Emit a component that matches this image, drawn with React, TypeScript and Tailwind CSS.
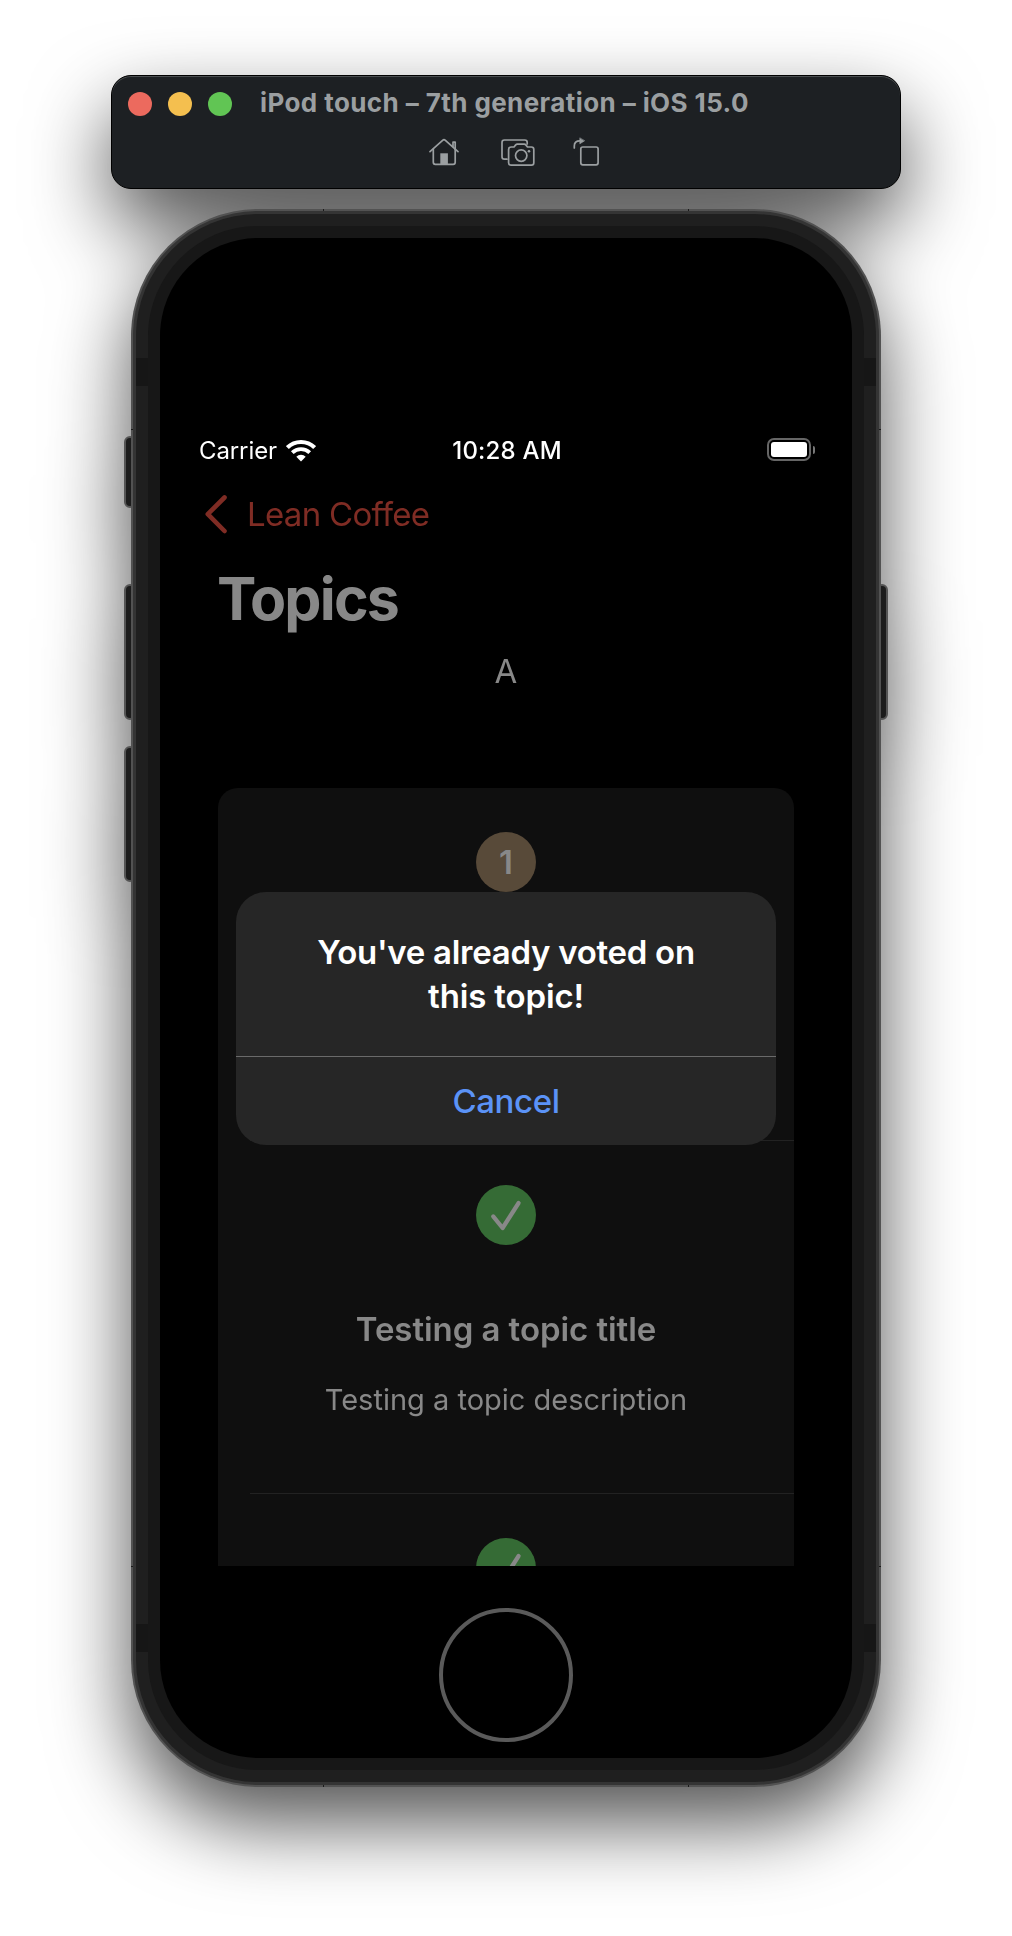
import type { ReactNode } from "react";

function TrafficLights() {
  return (
    <div className="absolute left-4 top-4 flex gap-4">
      <span className="size-6 rounded-full bg-[#ec6a5e]" />
      <span className="size-6 rounded-full bg-[#f4bf4f]" />
      <span className="size-6 rounded-full bg-[#61c554]" />
    </div>
  );
}

function HomeIcon() {
  return (
    <svg width="30" height="28" viewBox="0 0 30 28" fill="none" stroke="#9b9fa1" strokeWidth="1.7" strokeLinejoin="round" strokeLinecap="round">
      <path d="M1 13.6 13.6 2.3Q15 1 16.4 2.3L29 13.6" />
      <path d="M4.3 11V24.3Q4.3 26.3 6.3 26.3H24.2Q26.2 26.3 26.2 24.3V11" />
      <path d="M24 8.5V4.2H26.2V11" />
      <rect x="11.3" y="15.3" width="7.6" height="11.5" fill="#9b9fa1" stroke="none" />
    </svg>
  );
}

function ScreenshotIcon() {
  return (
    <svg width="34" height="28" viewBox="0 0 34 28" fill="none" stroke="#9b9fa1" strokeWidth="1.7" strokeLinejoin="round" strokeLinecap="round">
      <path d="M6 20.2H3.4Q1 20.2 1 17.8V3.4Q1 1 3.4 1H23.8Q26.2 1 26.2 3.4V5" />
      <path d="M10 8H13L14.7 5.9Q15.4 5.2 16.3 5.2H23.2Q24.2 5.2 24.8 5.9L26.5 8H30.4Q32.8 8 32.8 10.4V23.8Q32.8 26.2 30.4 26.2H10Q7.6 26.2 7.6 23.8V10.4Q7.6 8 10 8Z" />
      <circle cx="20.2" cy="16.6" r="5.7" />
      <circle cx="28" cy="12.2" r="1.3" fill="#9b9fa1" stroke="none" />
    </svg>
  );
}

function RotateIcon() {
  return (
    <svg width="27" height="30" viewBox="0 0 27 30" fill="none" stroke="#9b9fa1" strokeWidth="1.7" strokeLinejoin="round" strokeLinecap="round">
      <rect x="7.8" y="10" width="17.3" height="17.8" rx="2" />
      <path d="M1.3 11V9Q1.3 3.9 7 3.9" />
      <path d="M6.8 1.2V6.8L11.4 3.9Z" fill="#9b9fa1" strokeWidth="0.6" />
    </svg>
  );
}

function WifiIcon() {
  return (
    <svg width="30" height="23" viewBox="0 0 30 23" fill="none" stroke="#fff" strokeWidth="4.1">
      <path d="M1.4 8.6A19.4 19.4 0 0 1 28.6 8.6" />
      <path d="M6.3 13.6A12.4 12.4 0 0 1 23.7 13.6" strokeWidth="3.8" />
      <path d="M10.3 17.8A6.6 6.6 0 0 1 19.7 17.8L15 22.4Z" fill="#fff" stroke="none" />
    </svg>
  );
}

function BatteryIcon() {
  return (
    <div className="flex items-center gap-0.5">
      <div className="h-[23px] w-11 rounded-[7px] border-2 border-[#666] p-0.5">
        <div className="h-full w-full rounded-[3px] bg-white" />
      </div>
      <div className="h-2 w-0.5 rounded-r-full bg-[#777]" />
    </div>
  );
}

function Check() {
  return (
    <svg width="32" height="32" viewBox="0 0 32 32" fill="none" stroke="#888" strokeWidth="4.2" strokeLinecap="round" strokeLinejoin="round">
      <path d="M3.2 17.4 12.6 29 28.6 4" />
    </svg>
  );
}

function Badge({ voted, children }: { voted?: boolean; children: ReactNode }) {
  return (
    <div
      className={
        voted
          ? "flex size-[60px] shrink-0 items-center justify-center rounded-full bg-[#356b35]"
          : "flex size-[60px] shrink-0 items-center justify-center rounded-full bg-[#584a39] text-[33px] font-semibold leading-none text-[#888]"
      }
    >
      {children}
    </div>
  );
}

function Alert() {
  return (
    <div className="absolute left-[76px] top-[654px] flex h-[253px] w-[540px] flex-col rounded-[30px] bg-[#262626] text-center">
      <div className="h-[164px] pt-[38px] text-[33px] font-semibold leading-[44px] text-white">
        <p className="tracking-[-0.28px]">You've already voted on</p>
        <p className="tracking-[-0.15px]">this topic!</p>
      </div>
      <div className="h-px bg-[#6a6a6a]" />
      <button className="flex flex-1 items-center justify-center text-[33px] font-medium leading-none tracking-[-0.4px] text-[#5b93f7]">
        Cancel
      </button>
    </div>
  );
}

function Screen() {
  return (
    <div className="relative flex h-full flex-col items-center overflow-hidden rounded-[98px] bg-black pt-[193px] leading-none text-[#888]">
      <div className="grid h-10 w-full grid-cols-3 items-center pl-[39px] pr-[37px] text-white">
        <div className="flex items-center gap-[9px]">
          <span className="text-[24px] tracking-[-0.1px]">Carrier</span>
          <div className="-mt-0.5"><WifiIcon /></div>
        </div>
        <span className="text-center text-[24px] font-medium tracking-[0.2px]">10:28 AM</span>
        <div className="-mt-[3px] flex justify-end"><BatteryIcon /></div>
      </div>
      <div className="flex h-[86px] w-full items-center gap-[19px] pl-[44px] text-[#7f2c24]">
        <svg width="24" height="40" viewBox="0 0 24 40" fill="none" stroke="currentColor" strokeWidth="4.6" strokeLinecap="round" strokeLinejoin="round">
          <path d="M20.5 3.5 3.8 20.2 20.5 37" />
        </svg>
        <span className="text-[33px] tracking-[-0.7px]">Lean Coffee</span>
      </div>
      <h1 className="flex h-[82px] w-full items-center pl-[57px] text-[59px] font-bold tracking-[-1.8px]">Topics</h1>
      <div className="flex h-16 items-center text-[33px]">A</div>
      <div className="mt-[85px] h-[778px] w-[576px] shrink-0 overflow-hidden rounded-t-[20px] bg-[#0f0f0f]">
        <div className="flex h-[352px] flex-col items-center pt-11">
          <Badge>1</Badge>
        </div>
        <div className="ml-8 h-px bg-[#222]" />
        <div className="flex h-[352px] flex-col items-center pt-11">
          <Badge voted><Check /></Badge>
          <h2 className="mt-[62px] text-[33px] font-semibold leading-[44px] tracking-[-0.07px]">Testing a topic title</h2>
          <p className="mt-[31px] text-[29px] leading-9">Testing a topic description</p>
        </div>
        <div className="ml-8 h-px bg-[#222]" />
        <div className="flex flex-col items-center pt-11">
          <Badge voted><Check /></Badge>
        </div>
      </div>
      <div className="mt-[42px] size-[134px] shrink-0 rounded-full border-4 border-[#5a5a5a]" />
      <Alert />
    </div>
  );
}

function Phone() {
  return (
    <div className="relative mt-5 h-[1578px] w-[750px]">
      <div className="absolute -left-[7px] top-[227px] h-[72px] w-3 rounded-[6px] border-2 border-[#555] bg-[#1c1c1c]" />
      <div className="absolute -left-[7px] top-[375px] h-[136px] w-3 rounded-[6px] border-2 border-[#555] bg-[#1c1c1c]" />
      <div className="absolute -left-[7px] top-[537px] h-[136px] w-3 rounded-[6px] border-2 border-[#555] bg-[#1c1c1c]" />
      <div className="absolute -right-[7px] top-[375px] h-[136px] w-3 rounded-[6px] border-2 border-[#555] bg-[#1c1c1c]" />
      <div className="relative h-full rounded-[127px] bg-[#525252] p-0.5">
        <div className="h-full rounded-[125px] bg-[#343434] p-[3px]">
          <div className="h-full rounded-[122px] bg-[#1f1f1f] p-3">
            <div className="h-full rounded-[110px] bg-[#171717] p-3">
              <Screen />
            </div>
          </div>
        </div>
      </div>
      <div className="absolute left-[5px] top-[149px] h-7 w-3 bg-[#161616]" />
      <div className="absolute right-[5px] top-[149px] h-7 w-3 bg-[#161616]" />
      <div className="absolute left-[5px] top-[1415px] h-7 w-3 bg-[#161616]" />
      <div className="absolute right-[5px] top-[1415px] h-7 w-3 bg-[#161616]" />
      <div className="absolute left-0 top-[220px] h-px w-0.5 bg-[#1a1a1a]" />
      <div className="absolute right-0 top-[220px] h-px w-0.5 bg-[#1a1a1a]" />
      <div className="absolute left-0 top-[1357px] h-px w-0.5 bg-[#1a1a1a]" />
      <div className="absolute right-0 top-[1357px] h-px w-0.5 bg-[#1a1a1a]" />
      <div className="absolute left-[192px] top-0 h-0.5 w-px bg-[#1a1a1a]" />
      <div className="absolute left-[557px] top-0 h-0.5 w-px bg-[#1a1a1a]" />
      <div className="absolute bottom-0 left-[192px] h-0.5 w-px bg-[#1a1a1a]" />
      <div className="absolute bottom-0 left-[557px] h-0.5 w-px bg-[#1a1a1a]" />
    </div>
  );
}

export default function App() {
  return (
    <div className="h-[1936px] w-[1012px] overflow-hidden bg-white pt-[75px] font-['Inter',sans-serif]">
      <div className="flex flex-col items-center drop-shadow-[0_36px_40px_rgba(0,0,0,0.68)]">
        <header className="relative h-[114px] w-[790px] rounded-[20px] border border-black bg-[#1d2023] shadow-[inset_0_1px_0_#4a4e50]">
          <TrafficLights />
          <h2 className="absolute left-[148px] top-[11px] whitespace-nowrap text-[26px] font-bold leading-8 tracking-[0.41px] text-[#9b9fa1]">
            iPod touch – 7th generation – iOS 15.0
          </h2>
          <div className="absolute left-[317px] top-[62px] flex items-start">
            <div><HomeIcon /></div>
            <div className="ml-[42px] mt-px"><ScreenshotIcon /></div>
            <div className="-mt-px ml-[38px]"><RotateIcon /></div>
          </div>
        </header>
        <Phone />
      </div>
    </div>
  );
}
